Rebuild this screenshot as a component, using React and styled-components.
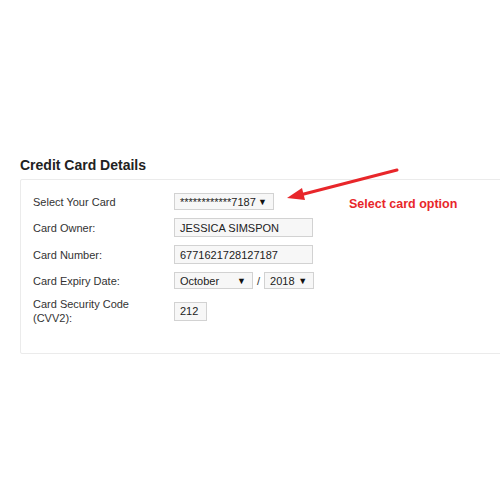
import React from "react";
import styled, { createGlobalStyle } from "styled-components";

const GlobalStyle = createGlobalStyle`
  html, body {
    margin: 0;
    background: #fff;
    font-family: "Liberation Sans", Arial, sans-serif;
    color: #333;
  }
`;

const Page = styled.div`
  position: relative;
  width: 500px;
  height: 500px;
  overflow: hidden;
  padding: 157px 0 0 20px;
  box-sizing: border-box;
`;

const Title = styled.h3`
  margin: 0 0 6px;
  font-size: 14px;
  line-height: 16px;
  font-weight: bold;
  color: #222;
`;

const Panel = styled.div`
  width: 520px;
  height: 175px;
  box-sizing: border-box;
  border: 1px solid #ebebeb;
  border-radius: 2px;
  padding: 13px 0 0 12px;
`;

const Form = styled.div`
  display: grid;
  grid-template-columns: 141px auto;
  row-gap: 8px;
  align-items: center;
`;

const Label = styled.div`
  font-size: 11px;
  line-height: 14px;
  color: #333;
  width: ${(p) => (p.$wrap ? "110px" : "auto")};
`;

const Field = styled.div`
  display: flex;
  align-items: center;
  gap: 4px;
  font-size: 11px;
`;

const Box = styled.div`
  box-sizing: border-box;
  height: ${(p) => p.$h || 19}px;
  width: ${(p) => p.$w}px;
  border: 1px solid #d2d2d2;
  background: #f7f7f7;
  font-size: 11px;
  color: #222;
  display: flex;
  align-items: center;
  justify-content: space-between;
  padding: 0 6px 0 5px;
  white-space: nowrap;
`;

const Caret = styled.span`
  font-size: 9px;
  color: #111;
`;

const Slash = styled.span`
  color: #333;
  font-size: 11px;
`;

const Note = styled.div`
  position: absolute;
  left: 349px;
  top: 197px;
  font-size: 12.5px;
  font-weight: bold;
  color: #e8262a;
`;

const Arrow = styled.svg`
  position: absolute;
  left: 280px;
  top: 160px;
`;

const Select = ({ w, value }) => (
  <Box $w={w} $h={17}>
    <span>{value}</span>
    <Caret>▼</Caret>
  </Box>
);

export default function App() {
  return (
    <>
      <GlobalStyle />
      <Page>
        <Title>Credit Card Details</Title>
        <Panel>
          <Form>
            <Label>Select Your Card</Label>
            <Field>
              <Select w={100} value="************7187" />
            </Field>
            <Label>Card Owner:</Label>
            <Field>
              <Box $w={139}>JESSICA SIMSPON</Box>
            </Field>
            <Label>Card Number:</Label>
            <Field>
              <Box $w={139}>6771621728127187</Box>
            </Field>
            <Label>Card Expiry Date:</Label>
            <Field>
              <Select w={79} value="October" />
              <Slash>/</Slash>
              <Select w={50} value="2018" />
            </Field>
            <Label $wrap>Card Security Code (CVV2):</Label>
            <Field>
              <Box $w={33}>212</Box>
            </Field>
          </Form>
        </Panel>
        <Arrow width="130" height="45" viewBox="0 0 130 45">
          <line x1="117" y1="10" x2="20" y2="35" stroke="#e8262a" strokeWidth="3" strokeLinecap="round" />
          <polygon points="7,38 22,28 25,40" fill="#e8262a" />
        </Arrow>
        <Note>Select card option</Note>
      </Page>
    </>
  );
}
